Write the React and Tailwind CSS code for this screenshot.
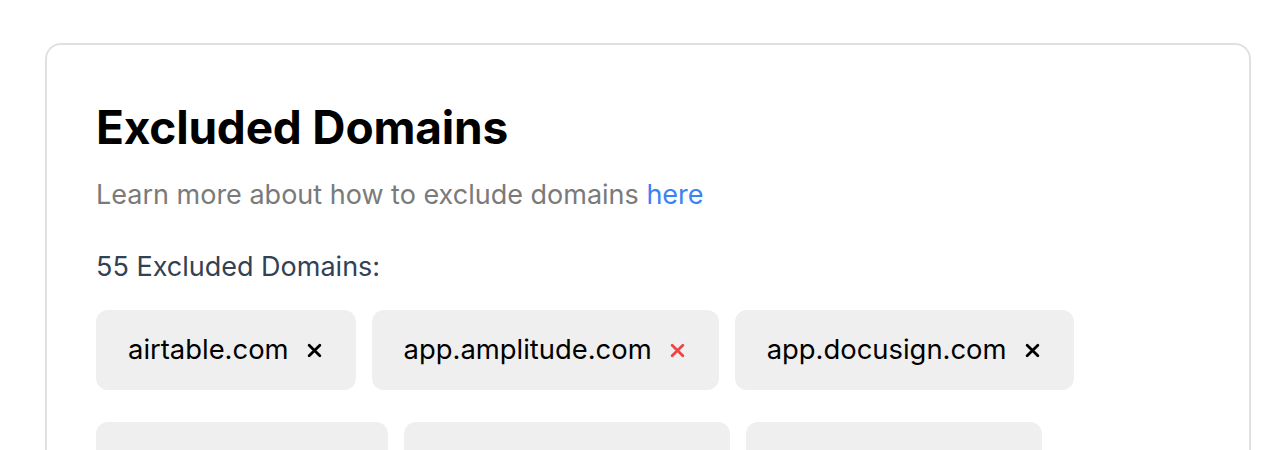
import React from 'react';

const domains = [
  'airtable.com',
  'app.amplitude.com',
  'app.docusign.com',
  'app.gusto.com',
  'app.hubspot.com',
  'app.asana.com',
  'app.pendo.io',
  'app.salesforce.com',
];

function XIcon({ className }) {
  return (
    <svg viewBox="0 0 14 14" className={className} fill="none" stroke="currentColor" strokeWidth="2.6" strokeLinecap="round">
      <path d="M2 2 L12 12 M12 2 L2 12" />
    </svg>
  );
}

export default function App() {
  return (
    <div className="min-h-screen bg-white pt-[43px] pl-[45px] pr-[37px] font-['Inter',sans-serif]">
      <div className="border-2 border-[#e0e0e0] rounded-2xl px-[49px] pt-[54px] pb-12">
        <h1 className="text-[46px] leading-[56px] font-bold text-black tracking-[-0.2px]">Excluded Domains</h1>
        <p className="mt-[22px] text-[27px] leading-[36px] text-[#7a7a7a]">
          Learn more about how to exclude domains <a className="text-[#3b82f6]">here</a>
        </p>
        <p className="mt-[36px] text-[27px] leading-[36px] text-[#334155]">55 Excluded Domains:</p>
        <div className="mt-[25px] flex flex-wrap gap-x-4 gap-y-8">
          {domains.map((d, i) => (
            <div key={d} className="h-[80px] flex items-center gap-[18px] pl-8 pr-[34px] rounded-xl bg-[#efefef] text-[27.4px] text-black">
              <span>{d}</span>
              <XIcon className={`w-[15px] h-[15px] ${i === 1 ? 'text-[#ef4444]' : 'text-black'}`} />
            </div>
          ))}
        </div>
      </div>
    </div>
  );
}
